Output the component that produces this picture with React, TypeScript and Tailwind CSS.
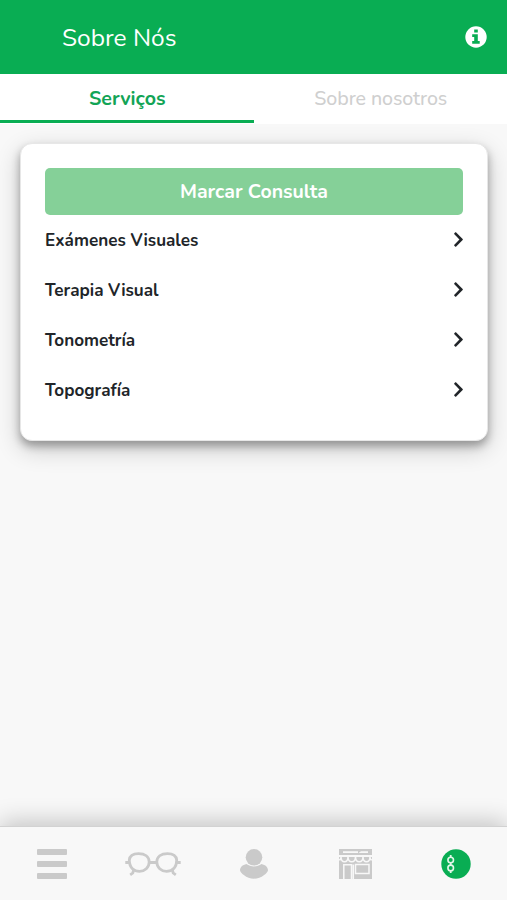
import React, { useState } from 'react';
import { FaChevronRight } from 'react-icons/fa';

const SERVICES = ['Exámenes Visuales', 'Terapia Visual', 'Tonometría', 'Topografía'];

const InfoIcon = () => (
  <svg width="22" height="22" viewBox="0 0 22 22">
    <circle cx="11" cy="11" r="10.700" fill="white" />
    <path d="M9.200 3.500h3.600v3.100H9.200ZM7.200 8.200h5.600v6.900h1.900v2.700H7.200v-2.700h2v-4.200h-2Z" fill="#09ad53" />
  </svg>
);

const MenuIcon = () => (
  <svg width="30" height="30" viewBox="0 0 30 30" fill="currentColor">
    <rect y="0" width="30" height="6" rx="1" />
    <rect y="12" width="30" height="6" rx="1" />
    <rect y="24" width="30" height="6" rx="1" />
  </svg>
);

const GlassesIcon = () => (
  <svg width="56" height="26" viewBox="0 0 56 26" fill="none" stroke="currentColor" strokeWidth="2.8">
    <path d="M4.300 9C4.800 4.200 8.500 2.600 13.500 2.600c6.500 0 10.700 3 10.700 8.400 0 5.500-4.500 9.300-9.700 9.300S4.300 17 4.300 9Z" />
    <path d="M51.700 9C51.200 4.200 47.500 2.600 42.500 2.600c-6.500 0-10.700 3-10.700 8.400 0 5.500 4.500 9.300 9.700 9.300S51.700 17 51.700 9Z" />
    <path d="M24 11.500h8M.3 11.500H5M51 11.500h4.700M9 18l-1.200 4-2.600 1.800M47 18l1.200 4 2.600 1.800" />
  </svg>
);

const UserIcon = () => (
  <svg width="28" height="30" viewBox="0 0 28 30" fill="currentColor">
    <circle cx="14" cy="8.300" r="8.300" />
    <path d="M6.500 15c4.200 3.200 10.800 3.200 15 0 4 .8 6.500 3.300 6.500 6.300 0 2.400-6.500 8.400-14 8.400S0 23.700 0 21.300c0-3 2.500-5.500 6.500-6.300Z" />
  </svg>
);

const StoreIcon = () => (
  <svg width="33" height="30" viewBox="0 0 33 30">
    <g fill="currentColor">
      <path fillRule="evenodd" d="M0 0h33v6H0ZM4 2.200v1.800h15V2.200Zm18 0L19.500 4H29V2.200Z" />
      <rect y="8" width="33" height="22" />
    </g>
    <g fill="none" stroke="#f8f8f8" strokeWidth="1.500">
      <path d="M0 10.500c1.300.8 2-.5 2-3 0 7 7 7 7 0 0 7 7.500 7 7.500 0 0 7 7.500 7 7.500 0 0 7 7 7 7 0 0 2.500.7 3.800 2 3" />
      <path d="M4.800 30V15.800h7.700V30M14.300 15.500V30" />
      <rect x="16.500" y="15.500" width="13.500" height="9" />
    </g>
    <path d="M6.500 17.500h4.500V30H6.500ZM18.200 17.300h10v5.200h-10Z" fill="currentColor" />
  </svg>
);

const ServicesIcon = () => (
  <svg width="30" height="30" viewBox="0 0 30 30">
    <circle cx="15" cy="15" r="14.700" fill="#09ad53" />
    <g fill="none" stroke="#e3f7e9" strokeWidth="1.600">
      <circle cx="9.700" cy="11" r="2.800" />
      <circle cx="9.700" cy="18.900" r="2.800" />
      <path d="M9.700 6v2.200M9.700 13.700v2.500M9.700 21.800V24" strokeWidth="1.800" />
    </g>
  </svg>
);

const TABS = ['Serviços', 'Sobre nosotros'];

const NAV_ITEMS = [
  { id: 'menu', Icon: MenuIcon },
  { id: 'glasses', Icon: GlassesIcon },
  { id: 'user', Icon: UserIcon },
  { id: 'store', Icon: StoreIcon },
  { id: 'services', Icon: ServicesIcon },
];

const App: React.FC = () => {
  const [tab, setTab] = useState(TABS[0]);

  return (
    <div className="flex flex-col h-screen bg-[#f8f8f8] font-['Nunito','Lato',sans-serif] overflow-hidden">
      <header className="flex items-center justify-between h-[74px] shrink-0 bg-[#09ad53] text-white pl-[62px] pr-5">
        <h1 className="text-[24.5px] leading-8 pt-px">Sobre Nós</h1>
        <InfoIcon />
      </header>

      <div className="flex h-[50px] shrink-0 bg-white pb-px">
        {TABS.map(name => (
          <button
            key={name}
            onClick={() => setTab(name)}
            className={`flex-1 pt-[3px] pl-px text-[19.6px] border-b-[3px]
              ${tab === name ? 'border-[#09ad53] text-[#13a456] font-bold' : 'border-transparent text-[#cfcfcf] font-medium tracking-[-0.1px]'}`}
          >
            {name}
          </button>
        ))}
      </div>

      <main className="flex-1 pl-5 pr-[19px] pt-[19px]">
        <section className="h-[298px] bg-white rounded-xl border border-[#e7e7e7] px-6 pt-6 shadow-[0_5px_9px_rgba(0,0,0,0.3),0_8px_25px_rgba(0,0,0,0.2)]">
          <button className="w-full h-[47px] rounded-[5px] bg-[#85d098] text-white text-[19.5px] font-bold">
            Marcar Consulta
          </button>
          <ul>
            {SERVICES.map(name => (
              <li key={name} className="flex items-center justify-between h-[50px] text-[#212529]">
                <span className="text-[17.1px] font-bold pt-px">{name}</span>
                <FaChevronRight className="w-[11px] h-[17px] -mr-[0.5px] mb-px" />
              </li>
            ))}
          </ul>
        </section>
      </main>

      <nav className="grid grid-cols-5 h-[74px] shrink-0 bg-[#f8f8f8] border-t border-[#d2d2d2] text-[#cacaca] pl-px shadow-[0_-4px_24px_rgba(0,0,0,0.22)]">
        {NAV_ITEMS.map(({ id, Icon }) => (
          <button key={id} className="flex items-center justify-center">
            <Icon />
          </button>
        ))}
      </nav>
    </div>
  );
};

export default App;
